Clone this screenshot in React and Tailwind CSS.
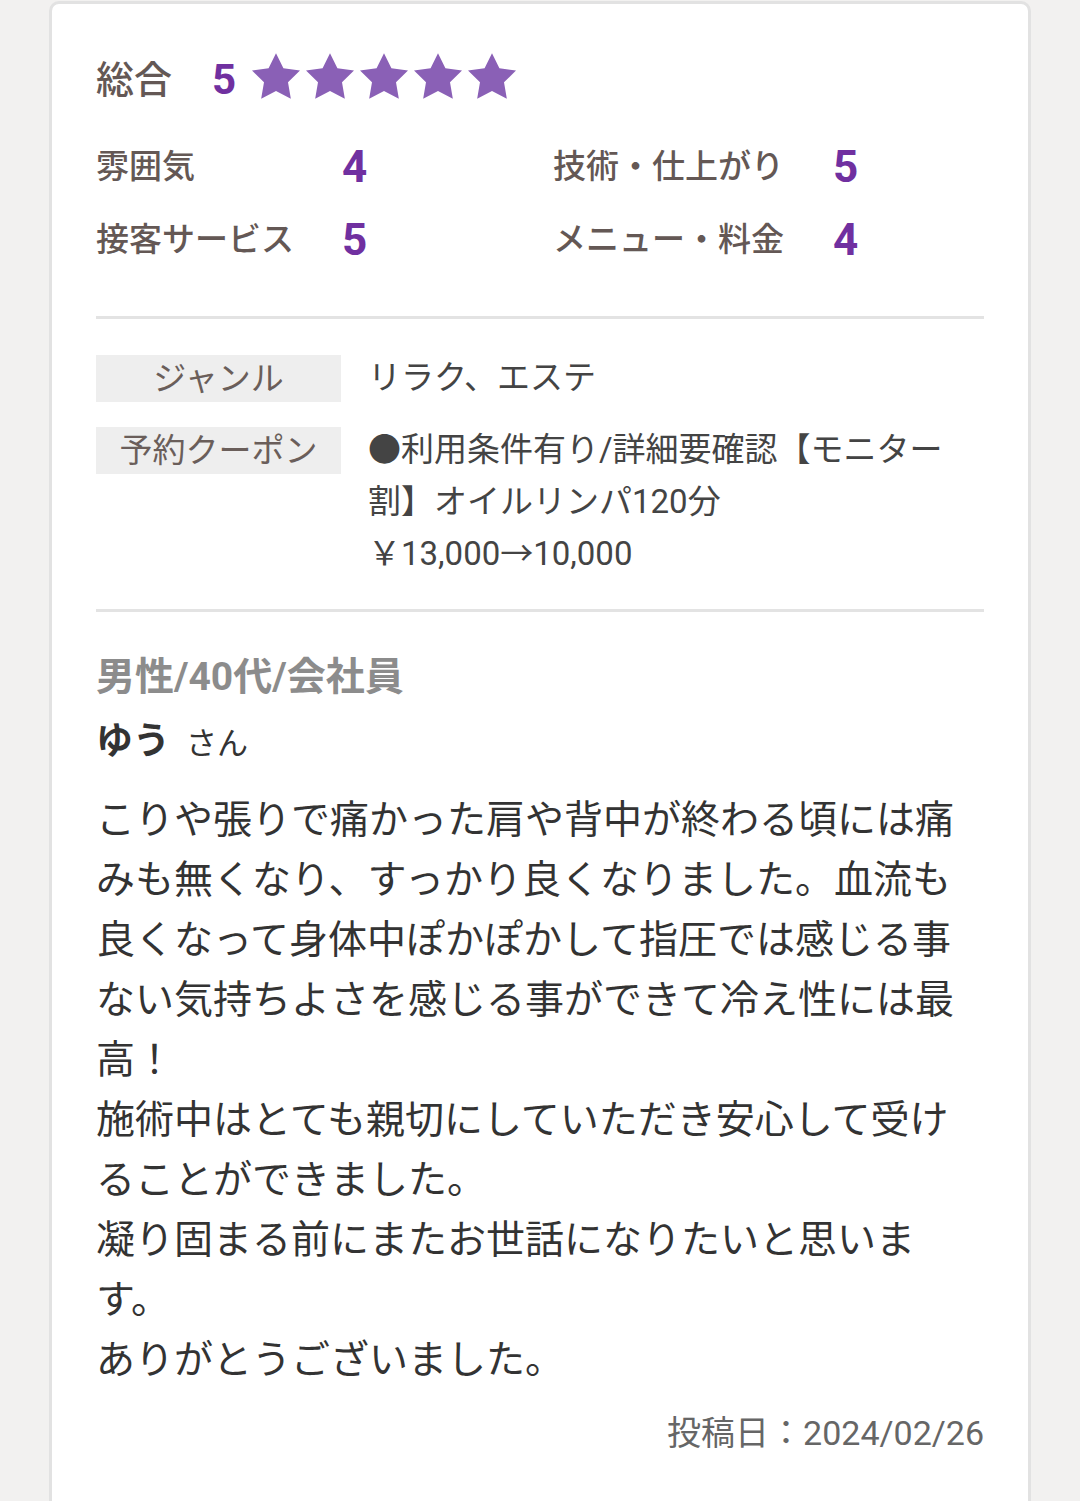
import React from "react";

const font = "font-['Roboto','Noto_Sans_CJK_JP',sans-serif]";

const Star = () => (
  <svg width="48" height="46" viewBox="2 2 20 19.02" className="shrink-0">
    <polygon
      points="12 2 15.09 8.26 22 9.27 17 14.14 18.18 21.02 12 17.77 5.82 21.02 7 14.14 2 9.27 8.91 8.26"
      fill="#8a60b6"
    />
  </svg>
);

const Rating = ({ label, value, labelWidth }) => (
  <div className="flex items-center h-[50px]">
    <span className={`${labelWidth} text-[33px] font-medium text-[#645855]`}>{label}</span>
    <span className="text-[44px] font-bold text-[#7030a0] leading-none">{value}</span>
  </div>
);

const InfoRow = ({ label, children }) => (
  <div className="flex">
    <div className="w-[245px] h-[47px] mt-[3px] shrink-0 bg-[#eeeeee] flex items-center justify-center text-[33px] text-[#6a5e5a]">
      {label}
    </div>
    <div className="ml-[27px] w-[600px] text-[33px] leading-[52px] text-[#444444]">{children}</div>
  </div>
);

export default function App() {
  return (
    <div className={`min-h-screen bg-[#f2f1f0] px-[49px] pt-[1px] ${font}`}>
      <div className="bg-white border-[3px] border-[#e2e2e2] rounded-[10px] px-[44px] pt-[51px] pb-[80px]">
        {/* overall */}
        <div className="flex items-center h-[50px]">
          <span className="text-[38px] font-medium text-[#645855]">総合</span>
          <span className="ml-[40px] text-[42px] font-bold text-[#7030a0] leading-none">5</span>
          <div className="ml-[16px] flex gap-[6px] -mt-[8px]">
            <Star />
            <Star />
            <Star />
            <Star />
            <Star />
          </div>
        </div>

        {/* sub ratings */}
        <div className="mt-[37px] flex flex-col gap-[23px]">
          <div className="flex">
            <div className="w-[457px]">
              <Rating label="雰囲気" value="4" labelWidth="w-[246px]" />
            </div>
            <Rating label="技術・仕上がり" value="5" labelWidth="w-[280px]" />
          </div>
          <div className="flex">
            <div className="w-[457px]">
              <Rating label="接客サービス" value="5" labelWidth="w-[246px]" />
            </div>
            <Rating label="メニュー・料金" value="4" labelWidth="w-[280px]" />
          </div>
        </div>

        <div className="mt-[51px] h-[3px] bg-[#e3e3e3]" />

        {/* info table */}
        <div className="mt-[33px] flex flex-col gap-[20px]">
          <InfoRow label="ジャンル">リラク、エステ</InfoRow>
          <InfoRow label="予約クーポン">
            ●利用条件有り/詳細要確認【モニター割】オイルリンパ120分
            <br />
            ￥13,000→10,000
          </InfoRow>
        </div>

        <div className="mt-[29px] h-[3px] bg-[#e3e3e3]" />

        {/* reviewer */}
        <div className="mt-[40px] h-[50px] flex items-center text-[39px] font-bold text-[#8c8c8c]">
          男性/40代/会社員
        </div>
        <div className="mt-[15px] h-[50px] flex items-baseline text-[#333333]">
          <span className="text-[37px] font-bold leading-[50px]">ゆう</span>
          <span className="ml-[16px] text-[31px] leading-[50px]">さん</span>
        </div>

        <p className="mt-[23px] text-[39px] leading-[60px] text-[#333333]">
          こりや張りで痛かった肩や背中が終わる頃には痛みも無くなり、すっかり良くなりました。血流も良くなって身体中ぽかぽかして指圧では感じる事ない気持ちよさを感じる事ができて冷え性には最高！
          <br />
          施術中はとても親切にしていただき安心して受けることができました。
          <br />
          凝り固まる前にまたお世話になりたいと思います。
          <br />
          ありがとうございました。
        </p>

        <div className="mt-[18px] h-[50px] flex items-center justify-end text-[34px] text-[#666666]">
          投稿日：2024/02/26
        </div>
      </div>
    </div>
  );
}
